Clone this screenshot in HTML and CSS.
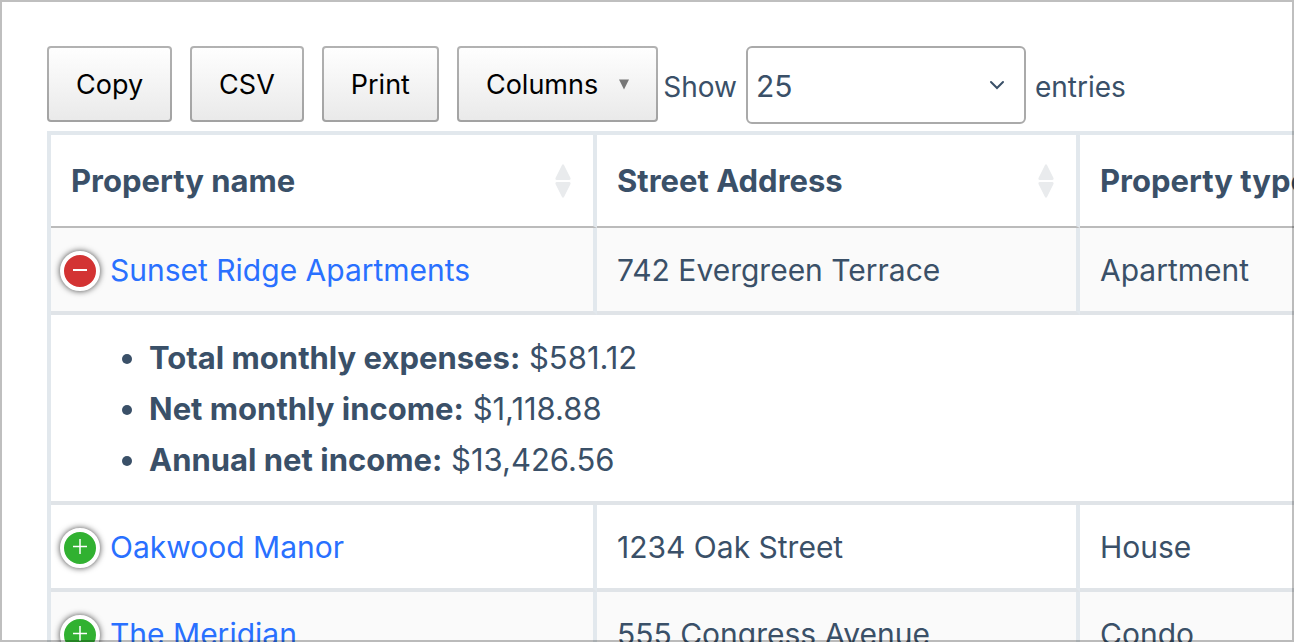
FILE: index.html
```html
<!DOCTYPE html>
<html lang="en">
<head>
    <meta charset="UTF-8">
    <meta name="viewport" content="width=device-width, initial-scale=1.0">
    <title>Properties</title>
    <link rel="stylesheet" href="styles.css">
</head>
<body>
    <div class="page">
        <div class="toolbar">
            <div class="buttons">
                <button type="button" class="btn">Copy</button>
                <button type="button" class="btn">CSV</button>
                <button type="button" class="btn">Print</button>
                <button type="button" class="btn">Columns
                    <svg class="caret" viewBox="0 0 10 10"><path d="M0 0h10L5 10z" fill="#777"/></svg>
                </button>
            </div>
            <div class="length">
                <label class="length-text" for="page-length">Show</label>
                <div class="select-wrap">
                    <select id="page-length">
                        <option>10</option>
                        <option selected>25</option>
                        <option>50</option>
                        <option>100</option>
                    </select>
                    <svg class="chevron" viewBox="0 0 16 10"><path d="M2 2l6 6 6-6" fill="none" stroke="#3a5068" stroke-width="2" stroke-linecap="round"/></svg>
                </div>
                <span class="length-text">entries</span>
            </div>
        </div>

        <table class="properties">
            <colgroup>
                <col class="col-name">
                <col class="col-address">
                <col class="col-type">
            </colgroup>
            <thead>
                <tr>
                    <th scope="col">
                        <div class="heading">Property name
                            <svg class="sort" viewBox="0 0 16 34"><path d="M7 1q1-1.500 2 0l6.500 13q.5 2-1.500 2H2q-2 0-1.500-2zM2 18h12q2 0 1.500 2L9 33q-1 1.500-2 0L.5 20Q0 18 2 18z" fill="#e9ebed"/></svg>
                        </div>
                    </th>
                    <th scope="col">
                        <div class="heading">Street Address
                            <svg class="sort" viewBox="0 0 16 34"><path d="M7 1q1-1.500 2 0l6.500 13q.5 2-1.500 2H2q-2 0-1.500-2zM2 18h12q2 0 1.500 2L9 33q-1 1.500-2 0L.5 20Q0 18 2 18z" fill="#e9ebed"/></svg>
                        </div>
                    </th>
                    <th scope="col">
                        <div class="heading">Property type
                            <svg class="sort" viewBox="0 0 16 34"><path d="M7 1q1-1.500 2 0l6.500 13q.5 2-1.500 2H2q-2 0-1.500-2zM2 18h12q2 0 1.500 2L9 33q-1 1.500-2 0L.5 20Q0 18 2 18z" fill="#e9ebed"/></svg>
                        </div>
                    </th>
                </tr>
            </thead>
            <tbody>
                <tr class="shaded">
                    <td class="name">
                        <div class="name-cell">
                            <button type="button" class="toggle open" aria-label="Hide details" aria-expanded="true">
                                <svg viewBox="0 0 32 32"><path d="M9 15h14" stroke="#fff" stroke-width="2"/></svg>
                            </button>
                            <a href="#">Sunset Ridge Apartments</a>
                        </div>
                    </td>
                    <td>742 Evergreen Terrace</td>
                    <td>Apartment</td>
                </tr>
                <tr class="details">
                    <td colspan="3">
                        <ul>
                            <li><strong>Total monthly expenses:</strong> $581.12</li>
                            <li><strong>Net monthly income:</strong> $1,118.88</li>
                            <li><strong>Annual net income:</strong> $13,426.56</li>
                        </ul>
                    </td>
                </tr>
                <tr>
                    <td class="name">
                        <div class="name-cell">
                            <button type="button" class="toggle" aria-label="Show details" aria-expanded="false">
                                <svg viewBox="0 0 32 32"><path d="M9 14.500h14M16 7v15" stroke="#fff" stroke-width="1.500"/></svg>
                            </button>
                            <a href="#">Oakwood Manor</a>
                        </div>
                    </td>
                    <td>1234 Oak Street</td>
                    <td>House</td>
                </tr>
                <tr class="shaded">
                    <td class="name">
                        <div class="name-cell">
                            <button type="button" class="toggle" aria-label="Show details" aria-expanded="false">
                                <svg viewBox="0 0 32 32"><path d="M9 14.500h14M16 7v15" stroke="#fff" stroke-width="1.500"/></svg>
                            </button>
                            <a href="#">The Meridian</a>
                        </div>
                    </td>
                    <td>555 Congress Avenue</td>
                    <td>Condo</td>
                </tr>
            </tbody>
        </table>
    </div>
</body>
</html>
```
FILE: styles.css
```css
* {
    box-sizing: border-box;
}

html, body {
    height: 100%;
}

body {
    margin: 0;
    overflow: hidden;
    background: #fff;
    color: #3a5068;
    font-family: Inter, "Liberation Sans", sans-serif;
    font-size: 30px;
    line-height: 51px;
}

/* frame drawn over whatever runs past the edge */
body::after {
    content: "";
    position: fixed;
    inset: 0;
    border: 2px solid rgba(0, 0, 0, 0.25);
    pointer-events: none;
}

.page {
    padding: 46px 0 0 47px;
}

.toolbar {
    display: flex;
    align-items: flex-start;
    gap: 5px;
    margin-bottom: 7px;
}

.buttons {
    display: flex;
    gap: 18px;
}

.btn {
    display: flex;
    align-items: center;
    gap: 21px;
    height: 76px;
    padding: 0 27px;
    border: 2px solid rgba(0, 0, 0, 0.3);
    border-radius: 4px;
    background: linear-gradient(to bottom, #fff, #e9e9e9) border-box;
    color: #000;
    font-family: inherit;
    font-size: 27px;
    cursor: pointer;
}

.caret {
    width: 10px;
    height: 11px;
}

.length {
    display: flex;
    align-items: center;
    gap: 9px;
}

.length-text {
    padding-top: 4px;
    font-size: 28px;
}

.select-wrap {
    position: relative;
}

select {
    display: block;
    width: 280px;
    height: 78px;
    padding: 2px 8px 0;
    border: 2px solid #aaa;
    border-radius: 6px;
    background: transparent;
    color: inherit;
    font-family: inherit;
    font-size: 30px;
    appearance: none;
}

.chevron {
    position: absolute;
    top: 34px;
    right: 21px;
    width: 16px;
    height: 10px;
    pointer-events: none;
}

.properties {
    width: 135%;
    table-layout: fixed;
    border-collapse: separate;
    border-spacing: 0;
    border-top: 4px solid #e2e8ed;
    border-left: 4px solid #e2e8ed;
}

.col-name {
    width: 546px;
}

.col-address {
    width: 483px;
}

th, td {
    padding: 17px 20px 15px;
    border-right: 4px solid #e2e8ed;
    border-bottom: 4px solid #e0e4e8;
    text-align: left;
}

th {
    padding: 20px 22px 20px 20px;
    border-bottom: 2px solid #bbb;
    font-size: 31px;
    font-weight: 700;
}

.heading {
    display: flex;
    align-items: center;
    justify-content: space-between;
}

.sort {
    width: 16px;
    height: 34px;
}

.shaded td {
    background: #fafafa;
}

.name {
    padding-left: 9px;
}

.name-cell {
    display: flex;
    align-items: center;
    gap: 10px;
}

.toggle {
    width: 40px;
    height: 40px;
    padding: 0;
    border: 4px solid #fff;
    border-radius: 50%;
    background: #31b131;
    box-shadow: 0 0 6px #444;
    cursor: pointer;
}

.toggle.open {
    background: #d33333;
}

.toggle svg {
    display: block;
    width: 32px;
    height: 32px;
}

a {
    color: #2970ff;
    text-decoration: none;
}

.details td {
    padding-bottom: 16px;
    font-size: 31px;
}

.details ul {
    margin: 0;
    padding: 0 0 0 78px;
}
```
